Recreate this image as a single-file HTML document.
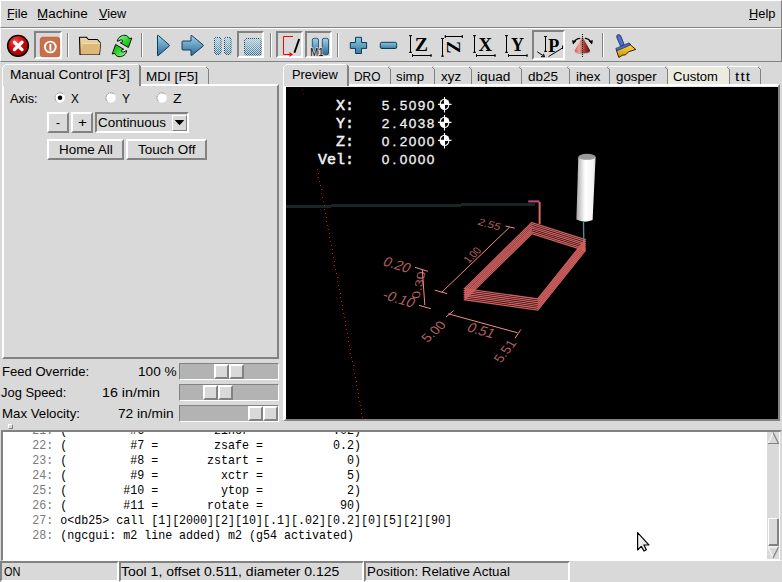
<!DOCTYPE html>
<html><head><meta charset="utf-8"><style>
html,body{margin:0;padding:0;}
body{width:782px;height:582px;overflow:hidden;position:relative;background:#d9d9d9;}
.t{position:absolute;white-space:pre;transform-origin:0 0;}
svg{overflow:visible}
</style></head><body>
<div style="position:absolute;left:0px;top:0px;width:782px;height:28px;box-sizing:border-box;border-style:solid;border-width:1px;border-color:#ffffff #828282 #828282 #ffffff;"></div>
<div class="t" style="left:6.50px;top:6.90px;font:normal 13px/13px 'Liberation Sans', sans-serif;color:#000;transform:scaleX(0.9842);">File</div>
<div class="t" style="left:37.30px;top:6.90px;font:normal 13px/13px 'Liberation Sans', sans-serif;color:#000;transform:scaleX(1.0317);">Machine</div>
<div class="t" style="left:99.00px;top:6.90px;font:normal 13px/13px 'Liberation Sans', sans-serif;color:#000;transform:scaleX(0.9732);">View</div>
<div class="t" style="left:748.50px;top:6.90px;font:normal 13px/13px 'Liberation Sans', sans-serif;color:#000;transform:scaleX(0.9882);">Help</div>
<div style="position:absolute;left:7px;top:19px;width:7px;height:1px;background:#000"></div>
<div style="position:absolute;left:38px;top:19px;width:9px;height:1px;background:#000"></div>
<div style="position:absolute;left:99px;top:19px;width:8px;height:1px;background:#000"></div>
<div style="position:absolute;left:749px;top:19px;width:8px;height:1px;background:#000"></div>
<div style="position:absolute;left:0px;top:28px;width:782px;height:34px;box-sizing:border-box;border-style:solid;border-width:1px;border-color:#ffffff #828282 #828282 #ffffff;"></div>
<div style="position:absolute;left:67px;top:33px;width:1px;height:24px;background:#828282"></div>
<div style="position:absolute;left:68px;top:33px;width:1px;height:24px;background:#ffffff"></div>
<div style="position:absolute;left:141px;top:33px;width:1px;height:24px;background:#828282"></div>
<div style="position:absolute;left:142px;top:33px;width:1px;height:24px;background:#ffffff"></div>
<div style="position:absolute;left:270px;top:33px;width:1px;height:24px;background:#828282"></div>
<div style="position:absolute;left:271px;top:33px;width:1px;height:24px;background:#ffffff"></div>
<div style="position:absolute;left:337px;top:33px;width:1px;height:24px;background:#828282"></div>
<div style="position:absolute;left:338px;top:33px;width:1px;height:24px;background:#ffffff"></div>
<div style="position:absolute;left:602px;top:33px;width:1px;height:24px;background:#828282"></div>
<div style="position:absolute;left:603px;top:33px;width:1px;height:24px;background:#ffffff"></div>
<div style="position:absolute;left:34px;top:31px;width:28px;height:28px;box-sizing:border-box;border-style:solid;border-width:2px;border-color:#828282 #ffffff #ffffff #828282;"></div>
<div style="position:absolute;left:237px;top:31px;width:27px;height:27px;box-sizing:border-box;border-style:solid;border-width:2px;border-color:#828282 #ffffff #ffffff #828282;"></div>
<div style="position:absolute;left:276px;top:31px;width:27px;height:27px;box-sizing:border-box;border-style:solid;border-width:2px;border-color:#828282 #ffffff #ffffff #828282;"></div>
<div style="position:absolute;left:305px;top:31px;width:27px;height:27px;box-sizing:border-box;border-style:solid;border-width:2px;border-color:#828282 #ffffff #ffffff #828282;"></div>
<div style="position:absolute;left:532px;top:30px;width:33px;height:30px;box-sizing:border-box;border-style:solid;border-width:2px;border-color:#828282 #ffffff #ffffff #828282;"></div>
<div style="position:absolute;left:2px;top:84px;width:277px;height:275px;box-sizing:border-box;border-style:solid;border-width:2px;border-color:#ffffff #828282 #828282 #ffffff;"></div>
<div style="position:absolute;left:141px;top:66px;width:65px;height:18px;box-sizing:border-box;border-top:1px solid #ffffff;"></div>
<div style="position:absolute;left:206px;top:67px;width:1px;height:1px;background:#828282"></div>
<div style="position:absolute;left:207px;top:68px;width:1px;height:1px;background:#828282"></div>
<div style="position:absolute;left:208px;top:69px;width:1px;height:15px;background:#828282"></div>
<div style="position:absolute;left:2px;top:64px;width:139px;height:22px;box-sizing:border-box;background:#d9d9d9;border-style:solid;border-width:1px 2px 0 1px;border-color:#ffffff #828282 #ffffff #ffffff;"></div>
<div class="t" style="left:10.30px;top:67.50px;font:normal 13px/13px 'Liberation Sans', sans-serif;color:#000;transform:scaleX(1.0496);">Manual Control [F3]</div>
<div class="t" style="left:145.50px;top:69.50px;font:normal 13px/13px 'Liberation Sans', sans-serif;color:#000;transform:scaleX(1.0430);">MDI [F5]</div>
<div class="t" style="left:10.30px;top:92.00px;font:normal 13px/13px 'Liberation Sans', sans-serif;color:#000;transform:scaleX(0.9806);">Axis:</div>
<div class="t" style="left:70.80px;top:92.00px;font:normal 13px/13px 'Liberation Sans', sans-serif;color:#000;transform:scaleX(0.9023);">X</div>
<div class="t" style="left:122.30px;top:92.00px;font:normal 13px/13px 'Liberation Sans', sans-serif;color:#000;transform:scaleX(0.9254);">Y</div>
<div class="t" style="left:172.90px;top:92.00px;font:normal 13px/13px 'Liberation Sans', sans-serif;color:#000;transform:scaleX(1.0845);">Z</div>
<div style="position:absolute;left:47px;top:112px;width:22px;height:21px;box-sizing:border-box;border-style:solid;border-width:2px;border-color:#ffffff #828282 #828282 #ffffff;"></div>
<div class="t" style="left:56.00px;top:115.50px;font:normal 13px/13px 'Liberation Sans', sans-serif;color:#000;transform:scaleX(0.9185);">-</div>
<div style="position:absolute;left:71px;top:112px;width:22px;height:21px;box-sizing:border-box;border-style:solid;border-width:2px;border-color:#ffffff #828282 #828282 #ffffff;"></div>
<div class="t" style="left:77.50px;top:116.00px;font:normal 13px/13px 'Liberation Sans', sans-serif;color:#000;transform:scaleX(1.1834);">+</div>
<div style="position:absolute;left:95px;top:112px;width:94px;height:21px;box-sizing:border-box;border-style:solid;border-width:2px;border-color:#828282 #ffffff #ffffff #828282;"></div>
<div class="t" style="left:98.30px;top:116.00px;font:normal 13px/13px 'Liberation Sans', sans-serif;color:#000;transform:scaleX(1.0337);">Continuous</div>
<div style="position:absolute;left:172px;top:115px;width:15px;height:16px;box-sizing:border-box;border-style:solid;border-width:1px;border-color:#ffffff #828282 #828282 #ffffff;"></div>
<div style="position:absolute;left:47px;top:139px;width:77px;height:21px;box-sizing:border-box;border-style:solid;border-width:2px;border-color:#ffffff #828282 #828282 #ffffff;"></div>
<div class="t" style="left:58.70px;top:142.90px;font:normal 13px/13px 'Liberation Sans', sans-serif;color:#000;transform:scaleX(1.0308);">Home All</div>
<div style="position:absolute;left:126px;top:139px;width:81px;height:21px;box-sizing:border-box;border-style:solid;border-width:2px;border-color:#ffffff #828282 #828282 #ffffff;"></div>
<div class="t" style="left:138.30px;top:142.90px;font:normal 13px/13px 'Liberation Sans', sans-serif;color:#000;transform:scaleX(1.0371);">Touch Off</div>
<div class="t" style="left:2.30px;top:365.00px;font:normal 13px/13px 'Liberation Sans', sans-serif;color:#000;transform:scaleX(1.0057);">Feed Override:</div>
<div class="t" style="left:138.30px;top:365.00px;font:normal 13px/13px 'Liberation Sans', sans-serif;color:#000;transform:scaleX(1.0473);">100 %</div>
<div class="t" style="left:1.20px;top:385.70px;font:normal 13px/13px 'Liberation Sans', sans-serif;color:#000;transform:scaleX(0.9927);">Jog Speed:</div>
<div class="t" style="left:102.30px;top:385.70px;font:normal 13px/13px 'Liberation Sans', sans-serif;color:#000;transform:scaleX(1.0970);">16 in/min</div>
<div class="t" style="left:2.30px;top:406.90px;font:normal 13px/13px 'Liberation Sans', sans-serif;color:#000;transform:scaleX(1.0187);">Max Velocity:</div>
<div class="t" style="left:117.90px;top:406.90px;font:normal 13px/13px 'Liberation Sans', sans-serif;color:#000;transform:scaleX(1.0534);">72 in/min</div>
<div style="position:absolute;left:179px;top:363px;width:100px;height:17px;box-sizing:border-box;border-style:solid;border-width:1px;border-color:#828282 #ffffff #ffffff #828282;background:#b3b3b3;"></div>
<div style="position:absolute;left:214px;top:364px;width:15px;height:15px;box-sizing:border-box;border-style:solid;border-width:2px;border-color:#ffffff #828282 #828282 #ffffff;background:#d9d9d9;"></div>
<div style="position:absolute;left:229px;top:364px;width:15px;height:15px;box-sizing:border-box;border-style:solid;border-width:2px;border-color:#ffffff #828282 #828282 #ffffff;background:#d9d9d9;"></div>
<div style="position:absolute;left:179px;top:384px;width:100px;height:17px;box-sizing:border-box;border-style:solid;border-width:1px;border-color:#828282 #ffffff #ffffff #828282;background:#b3b3b3;"></div>
<div style="position:absolute;left:203px;top:385px;width:15px;height:15px;box-sizing:border-box;border-style:solid;border-width:2px;border-color:#ffffff #828282 #828282 #ffffff;background:#d9d9d9;"></div>
<div style="position:absolute;left:218px;top:385px;width:15px;height:15px;box-sizing:border-box;border-style:solid;border-width:2px;border-color:#ffffff #828282 #828282 #ffffff;background:#d9d9d9;"></div>
<div style="position:absolute;left:179px;top:405px;width:100px;height:17px;box-sizing:border-box;border-style:solid;border-width:1px;border-color:#828282 #ffffff #ffffff #828282;background:#b3b3b3;"></div>
<div style="position:absolute;left:248px;top:406px;width:15px;height:15px;box-sizing:border-box;border-style:solid;border-width:2px;border-color:#ffffff #828282 #828282 #ffffff;background:#d9d9d9;"></div>
<div style="position:absolute;left:263px;top:406px;width:15px;height:15px;box-sizing:border-box;border-style:solid;border-width:2px;border-color:#ffffff #828282 #828282 #ffffff;background:#d9d9d9;"></div>
<div style="position:absolute;left:8px;top:424px;width:5px;height:5px;box-sizing:border-box;border-style:solid;border-width:1px;border-color:#ffffff #828282 #828282 #ffffff;"></div>
<div style="position:absolute;left:283px;top:84px;width:497px;height:337px;box-sizing:border-box;border-style:solid;border-width:2px 2px 2px 3px;border-color:#ffffff #828282 #828282 #ffffff;"></div>
<div style="position:absolute;left:286px;top:86px;width:492px;height:1px;background:#ececec"></div>
<div style="position:absolute;left:286px;top:87px;width:492px;height:332px;background:#000"></div>
<div style="position:absolute;left:349px;top:66px;width:42px;height:18px;box-sizing:border-box;background:#d9d9d9;border-top:1px solid #ffffff;"></div>
<div style="position:absolute;left:388px;top:66px;width:2px;height:1px;background:#d9d9d9"></div>
<div style="position:absolute;left:388px;top:67px;width:1px;height:1px;background:#828282"></div>
<div style="position:absolute;left:389px;top:68px;width:1px;height:1px;background:#828282"></div>
<div style="position:absolute;left:390px;top:67px;width:1px;height:1px;background:#d9d9d9"></div>
<div style="position:absolute;left:390px;top:68px;width:1px;height:1px;background:#d9d9d9"></div>
<div style="position:absolute;left:390px;top:69px;width:1px;height:15px;background:#828282"></div>
<div class="t" style="left:354.00px;top:69.90px;font:normal 13px/13px 'Liberation Sans', sans-serif;color:#000;transform:scaleX(0.9182);">DRO</div>
<div style="position:absolute;left:391px;top:66px;width:44px;height:18px;box-sizing:border-box;background:#d9d9d9;border-top:1px solid #ffffff;"></div>
<div style="position:absolute;left:432px;top:66px;width:2px;height:1px;background:#d9d9d9"></div>
<div style="position:absolute;left:432px;top:67px;width:1px;height:1px;background:#828282"></div>
<div style="position:absolute;left:433px;top:68px;width:1px;height:1px;background:#828282"></div>
<div style="position:absolute;left:434px;top:67px;width:1px;height:1px;background:#d9d9d9"></div>
<div style="position:absolute;left:434px;top:68px;width:1px;height:1px;background:#d9d9d9"></div>
<div style="position:absolute;left:434px;top:69px;width:1px;height:15px;background:#828282"></div>
<div class="t" style="left:396.20px;top:69.90px;font:normal 13px/13px 'Liberation Sans', sans-serif;color:#000;transform:scaleX(1.0208);">simp</div>
<div style="position:absolute;left:435px;top:66px;width:37px;height:18px;box-sizing:border-box;background:#d9d9d9;border-top:1px solid #ffffff;"></div>
<div style="position:absolute;left:469px;top:66px;width:2px;height:1px;background:#d9d9d9"></div>
<div style="position:absolute;left:469px;top:67px;width:1px;height:1px;background:#828282"></div>
<div style="position:absolute;left:470px;top:68px;width:1px;height:1px;background:#828282"></div>
<div style="position:absolute;left:471px;top:67px;width:1px;height:1px;background:#d9d9d9"></div>
<div style="position:absolute;left:471px;top:68px;width:1px;height:1px;background:#d9d9d9"></div>
<div style="position:absolute;left:471px;top:69px;width:1px;height:15px;background:#828282"></div>
<div class="t" style="left:441.00px;top:69.90px;font:normal 13px/13px 'Liberation Sans', sans-serif;color:#000;transform:scaleX(1.0308);">xyz</div>
<div style="position:absolute;left:472px;top:66px;width:50px;height:18px;box-sizing:border-box;background:#d9d9d9;border-top:1px solid #ffffff;"></div>
<div style="position:absolute;left:519px;top:66px;width:2px;height:1px;background:#d9d9d9"></div>
<div style="position:absolute;left:519px;top:67px;width:1px;height:1px;background:#828282"></div>
<div style="position:absolute;left:520px;top:68px;width:1px;height:1px;background:#828282"></div>
<div style="position:absolute;left:521px;top:67px;width:1px;height:1px;background:#d9d9d9"></div>
<div style="position:absolute;left:521px;top:68px;width:1px;height:1px;background:#d9d9d9"></div>
<div style="position:absolute;left:521px;top:69px;width:1px;height:15px;background:#828282"></div>
<div class="t" style="left:477.20px;top:69.90px;font:normal 13px/13px 'Liberation Sans', sans-serif;color:#000;transform:scaleX(1.0508);">iquad</div>
<div style="position:absolute;left:522px;top:66px;width:48px;height:18px;box-sizing:border-box;background:#d9d9d9;border-top:1px solid #ffffff;"></div>
<div style="position:absolute;left:567px;top:66px;width:2px;height:1px;background:#d9d9d9"></div>
<div style="position:absolute;left:567px;top:67px;width:1px;height:1px;background:#828282"></div>
<div style="position:absolute;left:568px;top:68px;width:1px;height:1px;background:#828282"></div>
<div style="position:absolute;left:569px;top:67px;width:1px;height:1px;background:#d9d9d9"></div>
<div style="position:absolute;left:569px;top:68px;width:1px;height:1px;background:#d9d9d9"></div>
<div style="position:absolute;left:569px;top:69px;width:1px;height:15px;background:#828282"></div>
<div class="t" style="left:527.80px;top:69.90px;font:normal 13px/13px 'Liberation Sans', sans-serif;color:#000;transform:scaleX(1.0372);">db25</div>
<div style="position:absolute;left:570px;top:66px;width:40px;height:18px;box-sizing:border-box;background:#d9d9d9;border-top:1px solid #ffffff;"></div>
<div style="position:absolute;left:607px;top:66px;width:2px;height:1px;background:#d9d9d9"></div>
<div style="position:absolute;left:607px;top:67px;width:1px;height:1px;background:#828282"></div>
<div style="position:absolute;left:608px;top:68px;width:1px;height:1px;background:#828282"></div>
<div style="position:absolute;left:609px;top:67px;width:1px;height:1px;background:#d9d9d9"></div>
<div style="position:absolute;left:609px;top:68px;width:1px;height:1px;background:#d9d9d9"></div>
<div style="position:absolute;left:609px;top:69px;width:1px;height:15px;background:#828282"></div>
<div class="t" style="left:575.50px;top:69.90px;font:normal 13px/13px 'Liberation Sans', sans-serif;color:#000;transform:scaleX(1.0228);">ihex</div>
<div style="position:absolute;left:610px;top:66px;width:58px;height:18px;box-sizing:border-box;background:#d9d9d9;border-top:1px solid #ffffff;"></div>
<div style="position:absolute;left:665px;top:66px;width:2px;height:1px;background:#d9d9d9"></div>
<div style="position:absolute;left:665px;top:67px;width:1px;height:1px;background:#828282"></div>
<div style="position:absolute;left:666px;top:68px;width:1px;height:1px;background:#828282"></div>
<div style="position:absolute;left:667px;top:67px;width:1px;height:1px;background:#d9d9d9"></div>
<div style="position:absolute;left:667px;top:68px;width:1px;height:1px;background:#d9d9d9"></div>
<div style="position:absolute;left:667px;top:69px;width:1px;height:15px;background:#828282"></div>
<div class="t" style="left:616.30px;top:69.90px;font:normal 13px/13px 'Liberation Sans', sans-serif;color:#000;transform:scaleX(1.0231);">gosper</div>
<div style="position:absolute;left:668px;top:66px;width:62px;height:18px;box-sizing:border-box;background:#ecebdf;border-top:1px solid #ffffff;"></div>
<div style="position:absolute;left:727px;top:66px;width:2px;height:1px;background:#d9d9d9"></div>
<div style="position:absolute;left:727px;top:67px;width:1px;height:1px;background:#828282"></div>
<div style="position:absolute;left:728px;top:68px;width:1px;height:1px;background:#828282"></div>
<div style="position:absolute;left:729px;top:67px;width:1px;height:1px;background:#d9d9d9"></div>
<div style="position:absolute;left:729px;top:68px;width:1px;height:1px;background:#d9d9d9"></div>
<div style="position:absolute;left:729px;top:69px;width:1px;height:15px;background:#828282"></div>
<div class="t" style="left:673.30px;top:69.90px;font:normal 13px/13px 'Liberation Sans', sans-serif;color:#000;transform:scaleX(1.0026);">Custom</div>
<div style="position:absolute;left:730px;top:66px;width:31px;height:18px;box-sizing:border-box;background:#d9d9d9;border-top:1px solid #ffffff;"></div>
<div style="position:absolute;left:758px;top:66px;width:2px;height:1px;background:#d9d9d9"></div>
<div style="position:absolute;left:758px;top:67px;width:1px;height:1px;background:#828282"></div>
<div style="position:absolute;left:759px;top:68px;width:1px;height:1px;background:#828282"></div>
<div style="position:absolute;left:760px;top:67px;width:1px;height:1px;background:#d9d9d9"></div>
<div style="position:absolute;left:760px;top:68px;width:1px;height:1px;background:#d9d9d9"></div>
<div style="position:absolute;left:760px;top:69px;width:1px;height:15px;background:#828282"></div>
<div class="t" style="left:735.00px;top:69.90px;font:normal 13px/13px 'Liberation Sans', sans-serif;color:#000;transform:scaleX(1.1794);letter-spacing:0.974px;">ttt</div>
<div style="position:absolute;left:283px;top:64px;width:66px;height:22px;box-sizing:border-box;background:#d9d9d9;border-style:solid;border-width:1px 2px 0 1px;border-color:#ffffff #828282 #ffffff #ffffff;"></div>
<div class="t" style="left:291.70px;top:67.80px;font:normal 13px/13px 'Liberation Sans', sans-serif;color:#000;transform:scaleX(0.9875);">Preview</div>
<div style="position:absolute;left:1px;top:430px;width:781px;height:131px;box-sizing:border-box;background:#fff;border-style:solid;border-width:2px 2px 1px 2px;border-color:#828282 #d9d9d9 #ffffff #828282;"></div>
<div style="position:absolute;left:767px;top:432px;width:12px;height:127px;background:#d9d9d9"></div>
<div style="position:absolute;left:0px;top:561px;width:119px;height:21px;box-sizing:border-box;border-style:solid;border-width:2px;border-color:#828282 #ffffff #ffffff #828282;background:#d9d9d9;"></div>
<div style="position:absolute;left:119px;top:561px;width:245px;height:21px;box-sizing:border-box;border-style:solid;border-width:2px;border-color:#828282 #ffffff #ffffff #828282;background:#d9d9d9;"></div>
<div style="position:absolute;left:364px;top:561px;width:206px;height:21px;box-sizing:border-box;border-style:solid;border-width:2px;border-color:#828282 #ffffff #ffffff #828282;background:#d9d9d9;"></div>
<div class="t" style="left:3.60px;top:564.80px;font:normal 13px/13px 'Liberation Sans', sans-serif;color:#000;transform:scaleX(0.8410);">ON</div>
<div class="t" style="left:120.90px;top:564.50px;font:normal 13px/13px 'Liberation Sans', sans-serif;color:#000;transform:scaleX(1.0775);">Tool 1, offset 0.511, diameter 0.125</div>
<div class="t" style="left:366.60px;top:564.50px;font:normal 13px/13px 'Liberation Sans', sans-serif;color:#000;transform:scaleX(1.0244);">Position: Relative Actual</div>
<svg style="position:absolute;left:0;top:0" width="782" height="582" viewBox="0 0 782 582">
<defs>
<radialGradient id="gRed" cx="0.38" cy="0.3" r="0.75"><stop offset="0" stop-color="#f05050"/><stop offset="0.5" stop-color="#d00808"/><stop offset="1" stop-color="#900000"/></radialGradient>
<linearGradient id="gBlue" x1="0" y1="0" x2="0" y2="1"><stop offset="0" stop-color="#9ed2e8"/><stop offset="1" stop-color="#2a6a96"/></linearGradient>
<linearGradient id="gBlue2" x1="0" y1="0" x2="0" y2="1"><stop offset="0" stop-color="#8cc6de"/><stop offset="1" stop-color="#3c7ca2"/></linearGradient>
<linearGradient id="gTan" x1="0" y1="0" x2="0" y2="1"><stop offset="0" stop-color="#f0d8a8"/><stop offset="1" stop-color="#d8b070"/></linearGradient>
<linearGradient id="gGreen" x1="0" y1="0" x2="1" y2="1"><stop offset="0" stop-color="#a8f8a8"/><stop offset="0.5" stop-color="#30d830"/><stop offset="1" stop-color="#10a010"/></linearGradient>
<linearGradient id="gCone" x1="0" y1="0" x2="1" y2="0"><stop offset="0" stop-color="#d06050"/><stop offset="0.3" stop-color="#f0a090"/><stop offset="0.6" stop-color="#b04030"/><stop offset="1" stop-color="#501010"/></linearGradient>
<linearGradient id="gBrush" x1="0" y1="0" x2="0" y2="1"><stop offset="0" stop-color="#f8e040"/><stop offset="1" stop-color="#d89000"/></linearGradient>
<linearGradient id="gDis" x1="0" y1="0" x2="0" y2="1"><stop offset="0" stop-color="#a8d8ea"/><stop offset="1" stop-color="#2a6e9e"/></linearGradient><pattern id="pChk" width="2" height="2" patternUnits="userSpaceOnUse"><rect x="1" y="0" width="1" height="1" fill="#d9d9d9"/><rect x="0" y="1" width="1" height="1" fill="#d9d9d9"/></pattern><pattern id="pDith" width="2" height="2" patternUnits="userSpaceOnUse"><rect width="2" height="2" fill="#d9d9d9"/><rect width="1" height="1" fill="#5a8cb0"/><rect x="1" y="1" width="1" height="1" fill="#7aa8c8"/></pattern>
<pattern id="pDith2" width="2" height="2" patternUnits="userSpaceOnUse"><rect width="2" height="2" fill="#b8d0dc"/><rect width="1" height="1" fill="#4a7ea4"/><rect x="1" y="1" width="1" height="1" fill="#6a9cbc"/></pattern>
</defs>

<!-- estop -->
<circle cx="18" cy="45.8" r="10.4" fill="url(#gRed)" stroke="#000" stroke-width="1.4"/>
<path d="M14.4 42.2 L22 49.6 M22 42.2 L14.4 49.6" stroke="#fff" stroke-width="3.3" stroke-linecap="round"/>
<!-- power -->
<rect x="40.3" y="37.2" width="19.4" height="19.6" rx="2.5" fill="#c8704c" stroke="#c43c24" stroke-width="0.6"/>
<circle cx="50.3" cy="47" r="5.4" fill="none" stroke="#fff" stroke-width="1.9"/>
<path d="M50.4 44 L50.4 50.6" stroke="#fff" stroke-width="1.9"/>
<!-- folder -->
<path d="M79.5 37.3 L86.6 37.3 L88.4 39.5 L97.5 39.5 L100.5 43 L99.5 54.5 L80 54.5 Z" fill="url(#gTan)" stroke="#000" stroke-width="1.1" stroke-linejoin="round"/>
<path d="M82.6 44.6 Q83 43.4 84.5 43.4 L100.4 43.2 L99.3 54.4 L80.6 54.4 Z" fill="#ddb878" stroke="none"/>
<path d="M82.8 44.5 Q83 43.5 84.5 43.4 L100.4 43.2" fill="none" stroke="#f8ecd0" stroke-width="0.8"/>
<!-- reload -->
<g id="arr"><path d="M117.3 41.3 C117.8 37.2 121.5 35.2 125 35.3 C127.2 35.5 128.5 36.8 129.2 38.6 L131.8 38 L128.4 47.5 L120.3 42.8 L122.6 41.8 C122.9 40.4 121.8 39.6 120.6 40 C119.4 40.5 118.6 41.2 117.3 41.3 Z" fill="url(#gGreen)" stroke="#000" stroke-width="0.9" stroke-linejoin="round"/></g>
<g transform="rotate(180 122 46)"><path d="M117.3 41.3 C117.8 37.2 121.5 35.2 125 35.3 C127.2 35.5 128.5 36.8 129.2 38.6 L131.8 38 L128.4 47.5 L120.3 42.8 L122.6 41.8 C122.9 40.4 121.8 39.6 120.6 40 C119.4 40.5 118.6 41.2 117.3 41.3 Z" fill="url(#gGreen)" stroke="#000" stroke-width="0.9" stroke-linejoin="round"/></g>
<!-- play -->
<path d="M157.5 36 Q157.3 34.8 158.4 35.5 L169 44.7 Q169.8 45.5 169 46.3 L158.4 55.5 Q157.3 56.2 157.5 55 Z" fill="url(#gBlue)" stroke="#0e3e5e" stroke-width="1"/>
<!-- step -->
<path d="M182 42 Q182 41 183 41 L191 41 L191 36 Q191 35 192 35.7 L203 44.8 Q203.7 45.5 203 46.2 L192 55.3 Q191 56 191 55 L191 50 L183 50 Q182 50 182 49 Z" fill="url(#gBlue)" stroke="#0e3e5e" stroke-width="1"/>
<!-- pause (disabled dithered) -->
<rect x="214.5" y="37.5" width="6.5" height="17" rx="2" fill="url(#gDis)" stroke="#0a4a78" stroke-width="1"/>
<rect x="224.5" y="37.5" width="6.5" height="17" rx="2" fill="url(#gDis)" stroke="#0a4a78" stroke-width="1"/>
<rect x="214" y="37" width="18" height="18.5" fill="url(#pChk)"/>
<!-- stop (disabled dithered) -->
<rect x="244.5" y="38.5" width="16.5" height="16.5" rx="1.8" fill="url(#gDis)" stroke="#0a4a78" stroke-width="1"/>
<rect x="244" y="38" width="18" height="18" fill="url(#pChk)"/>
<!-- block delete -->
<path d="M293 36.5 L283.5 36.5 L283.5 54.5 L290 54.5" fill="none" stroke="#ff0000" stroke-width="1"/>
<path d="M289.5 52 L293 54.5 L289.5 57 Z" fill="#ff0000"/>
<path d="M299.2 39 L294.4 52.8" stroke="#000" stroke-width="1.9"/>
<!-- M1 -->
<rect x="312.3" y="38.3" width="6.2" height="16.5" rx="1.8" fill="url(#gBlue)" stroke="#0e3e5e" stroke-width="0.8"/>
<rect x="322.3" y="38.3" width="6.2" height="16.5" rx="1.8" fill="url(#gBlue)" stroke="#0e3e5e" stroke-width="0.8"/>
<text x="310.3" y="55.6" font-family="Liberation Sans, sans-serif" font-size="10" font-weight="normal" fill="#000" stroke="#dcdcdc" stroke-width="1.4" paint-order="stroke" textLength="13.3" lengthAdjust="spacingAndGlyphs">M1</text>
<!-- plus -->
<path d="M355.5 37.3 L361.5 37.3 L361.5 42.5 L366.6 42.5 L366.6 48.4 L361.5 48.4 L361.5 53.5 L355.5 53.5 L355.5 48.4 L350.3 48.4 L350.3 42.5 L355.5 42.5 Z" fill="url(#gBlue2)" stroke="#0a3a5a" stroke-width="1" stroke-linejoin="round"/>
<rect x="380.3" y="42.3" width="16.4" height="6.2" rx="1.5" fill="url(#gBlue2)" stroke="#0a3a5a" stroke-width="1"/>
<path d="M410.5 35.2 L410.5 52.8 M409 35.7 L412 35.7 M409 52.3 L412 52.3" stroke="#000" stroke-width="1"/><text x="414.8" y="51.2" font-family="Liberation Serif, serif" font-weight="bold" font-size="18.5" textLength="13.2" lengthAdjust="spacingAndGlyphs" >Z</text><path d="M412 55.5 L431.5 55.5 M412.5 54 L412.5 57 M431.0 54 L431.0 57" stroke="#000" stroke-width="1"/><path d="M442.5 38 L442.5 56.6 M441 38.5 L444 38.5 M441 56.1 L444 56.1" stroke="#000" stroke-width="1"/><path d="M444.8 36.5 L462.8 36.5 M445.3 35 L445.3 38 M462.3 35 L462.3 38" stroke="#000" stroke-width="1"/><text x="0" y="0" font-family="Liberation Serif, serif" font-weight="bold" font-size="18.5" textLength="12.5" lengthAdjust="spacingAndGlyphs" transform="translate(447,41) rotate(90)">Z</text><path d="M474.5 35.2 L474.5 52.8 M473 35.7 L476 35.7 M473 52.3 L476 52.3" stroke="#000" stroke-width="1"/><text x="478.6" y="51.2" font-family="Liberation Serif, serif" font-weight="bold" font-size="18.5" textLength="13.6" lengthAdjust="spacingAndGlyphs" >X</text><path d="M476 55.5 L495.5 55.5 M476.5 54 L476.5 57 M495.0 54 L495.0 57" stroke="#000" stroke-width="1"/><path d="M506.5 35.2 L506.5 52.8 M505 35.7 L508 35.7 M505 52.3 L508 52.3" stroke="#000" stroke-width="1"/><text x="511" y="51.2" font-family="Liberation Serif, serif" font-weight="bold" font-size="18.5" textLength="13.0" lengthAdjust="spacingAndGlyphs" >Y</text><path d="M508 55.5 L527.5 55.5 M508.5 54 L508.5 57 M527.0 54 L527.0 57" stroke="#000" stroke-width="1"/><path d="M545.5 36 L545.5 51.8 M544 36.5 L547 36.5 M544 51.3 L547 51.3" stroke="#000" stroke-width="1"/><text x="548.3" y="51.6" font-family="Liberation Serif, serif" font-weight="bold" font-size="18.5" textLength="11.0" lengthAdjust="spacingAndGlyphs" >P</text><path d="M537.3 51.8 L544.2 56.4 M548.5 56.6 L562.5 48 M562.6 45.5 L562.6 49" stroke="#000" stroke-width="1" fill="none"/><path d="M541 56.6 L544.6 56.8 L543.4 53.8" stroke="#000" stroke-width="1" fill="none"/><ellipse cx="582.5" cy="51.8" rx="8" ry="2.4" fill="#202020" opacity="0.2"/><path d="M582.4 36.8 L590 50.3 Q590 53.2 582.4 53.2 Q574.8 53.2 574.8 50.3 Z" fill="url(#gCone)"/><path d="M582.5 34 L582.5 58" stroke="#000" stroke-width="1" stroke-dasharray="1 1"/><path d="M580.2 38.3 Q576.2 38.6 574.3 41.6 M584.8 38.3 Q588.8 38.6 590.7 41.6" stroke="#000" stroke-width="1.1" fill="none"/><path d="M572 40.2 L576.3 41 L573 44.4 Z M593 40.2 L588.7 41 L592 44.4 Z" fill="#000"/><path d="M616.8 37.5 Q616.2 35 618.3 34.6 Q620.2 34.4 621 36.5 L624.2 44.8 L620.6 46.3 Z" fill="#5272c4" stroke="#142460" stroke-width="0.8"/><path d="M616.2 49.6 L629.8 43.6 L631.2 45.6 L635.8 49.4 L628.6 51.8 L625.6 54.8 L622.5 55.2 L618.8 57.4 Z" fill="url(#gBrush)" stroke="#1a1400" stroke-width="0.9" stroke-linejoin="round"/><path d="M615.8 48.4 L629 42.8 L630.2 45.2 L616.8 50.9 Z" fill="#4a6cc0" stroke="#142460" stroke-width="0.6"/></svg>
<svg style="position:absolute;left:286px;top:87px;overflow:hidden" width="492" height="331" viewBox="286 87 492 331"><g fill="#182626"><rect x="286" y="205" width="45" height="3"/><rect x="331" y="204" width="130" height="3"/><rect x="461" y="203" width="74" height="3"/></g><g fill="#f00000"><rect x="317" y="169" width="1" height="1"/><rect x="318" y="173" width="1" height="1"/><rect x="318" y="177" width="1" height="1"/><rect x="319" y="181" width="1" height="1"/><rect x="320" y="185" width="1" height="1"/><rect x="321" y="189" width="1" height="1"/><rect x="321" y="193" width="1" height="1"/><rect x="322" y="197" width="1" height="1"/><rect x="323" y="201" width="1" height="1"/><rect x="324" y="205" width="1" height="1"/><rect x="324" y="209" width="1" height="1"/><rect x="325" y="213" width="1" height="1"/><rect x="326" y="217" width="1" height="1"/><rect x="326" y="221" width="1" height="1"/><rect x="327" y="225" width="1" height="1"/><rect x="328" y="229" width="1" height="1"/><rect x="329" y="233" width="1" height="1"/><rect x="329" y="237" width="1" height="1"/><rect x="330" y="241" width="1" height="1"/><rect x="331" y="245" width="1" height="1"/><rect x="332" y="249" width="1" height="1"/><rect x="332" y="253" width="1" height="1"/><rect x="333" y="257" width="1" height="1"/><rect x="334" y="261" width="1" height="1"/><rect x="334" y="265" width="1" height="1"/><rect x="335" y="269" width="1" height="1"/><rect x="336" y="273" width="1" height="1"/><rect x="337" y="277" width="1" height="1"/><rect x="337" y="281" width="1" height="1"/><rect x="338" y="285" width="1" height="1"/><rect x="339" y="289" width="1" height="1"/><rect x="340" y="293" width="1" height="1"/><rect x="340" y="297" width="1" height="1"/><rect x="341" y="301" width="1" height="1"/><rect x="342" y="305" width="1" height="1"/><rect x="342" y="309" width="1" height="1"/><rect x="343" y="313" width="1" height="1"/><rect x="344" y="317" width="1" height="1"/><rect x="345" y="321" width="1" height="1"/><rect x="345" y="325" width="1" height="1"/><rect x="346" y="329" width="1" height="1"/><rect x="347" y="333" width="1" height="1"/><rect x="348" y="337" width="1" height="1"/><rect x="348" y="341" width="1" height="1"/><rect x="349" y="345" width="1" height="1"/><rect x="350" y="349" width="1" height="1"/><rect x="350" y="353" width="1" height="1"/><rect x="351" y="357" width="1" height="1"/><rect x="352" y="361" width="1" height="1"/><rect x="353" y="365" width="1" height="1"/><rect x="353" y="369" width="1" height="1"/><rect x="354" y="373" width="1" height="1"/><rect x="355" y="377" width="1" height="1"/><rect x="356" y="381" width="1" height="1"/><rect x="356" y="385" width="1" height="1"/><rect x="357" y="389" width="1" height="1"/><rect x="358" y="393" width="1" height="1"/><rect x="358" y="397" width="1" height="1"/><rect x="359" y="401" width="1" height="1"/><rect x="360" y="405" width="1" height="1"/><rect x="361" y="409" width="1" height="1"/><rect x="361" y="413" width="1" height="1"/><rect x="362" y="417" width="1" height="1"/></g><g fill="#900000"><rect x="302" y="89" width="1" height="1"/><rect x="303" y="93" width="1" height="1"/></g><path d="M528.2 201.4 L539.5 201.4" stroke="#c04888" stroke-width="2" fill="none"/><path d="M539.6 202 L539.6 224" stroke="#d86a6a" stroke-width="2" fill="none"/><polygon points="531.8,222.6 585.2,239.6 537.8,299.0 464.6,288.6" fill="none" stroke="#d06060" stroke-width="1.3"/><polygon points="531.8,224.4 585.2,241.4 537.8,300.9 464.6,290.5" fill="none" stroke="#d06060" stroke-width="1.3"/><polygon points="531.8,226.3 585.2,243.3 537.8,302.7 464.6,292.3" fill="none" stroke="#d06060" stroke-width="1.3"/><polygon points="531.8,228.2 585.2,245.2 537.8,304.6 464.6,294.2" fill="none" stroke="#d06060" stroke-width="1.3"/><polygon points="531.8,230.0 585.2,247.0 537.8,306.4 464.6,296.0" fill="none" stroke="#d06060" stroke-width="1.3"/><polygon points="531.8,231.8 585.2,248.8 537.8,308.2 464.6,297.9" fill="none" stroke="#d06060" stroke-width="1.3"/><polygon points="531.8,233.7 585.2,250.7 537.8,310.1 464.6,299.7" fill="none" stroke="#d06060" stroke-width="1.3"/><defs><linearGradient id="gTool" x1="0" y1="0" x2="1" y2="0"><stop offset="0" stop-color="#a8a8a8"/><stop offset="0.45" stop-color="#ffffff"/><stop offset="0.85" stop-color="#f4f4f4"/><stop offset="1" stop-color="#d8d8d8"/></linearGradient></defs><path d="M578.3 157 L576.4 219.5 Q584 223.5 592.6 220 L595.6 157 Z" fill="url(#gTool)"/><ellipse cx="587" cy="156.8" rx="8.6" ry="3" fill="#9a9a9a"/><path d="M583.5 221.5 L583.8 241" stroke="#4a9696" stroke-width="1.3" fill="none"/><g stroke="#f48a8a" stroke-width="1" fill="none"><path d="M441.5 292.5 L509.6 227.2"/><path d="M505.5 226 L514.8 228.2"/><path d="M434.8 290.2 L447.2 293.6"/><path d="M422.3 269.5 L424.8 305"/><path d="M415 267.3 L427.8 271.3"/><path d="M418.9 305.3 L430.9 308.7"/><path d="M448.2 313.8 L517.5 332.8"/><path d="M446 317 L453.6 310.6"/><path d="M515 338.3 L520.8 329.6"/></g><text transform="translate(382,265) rotate(17) skewX(-12)" font-family="Liberation Sans, sans-serif" font-size="14" fill="#f48a8a" fill-opacity="0.72" textLength="27" lengthAdjust="spacingAndGlyphs">0.20</text><text transform="translate(381.5,298.5) rotate(17) skewX(-12)" font-family="Liberation Sans, sans-serif" font-size="14" fill="#f48a8a" fill-opacity="0.72" textLength="32" lengthAdjust="spacingAndGlyphs">-0.10</text><text transform="translate(419,299) rotate(-76) skewX(10)" font-family="Liberation Sans, sans-serif" font-size="11" fill="#f48a8a" fill-opacity="0.72" textLength="28" lengthAdjust="spacingAndGlyphs">0.30</text><text transform="translate(466,331) rotate(16) skewX(-14)" font-family="Liberation Sans, sans-serif" font-size="14" fill="#f48a8a" fill-opacity="0.72" textLength="27" lengthAdjust="spacingAndGlyphs">0.51</text><text transform="translate(427.5,343) rotate(-42) skewX(10)" font-family="Liberation Sans, sans-serif" font-size="13" fill="#f48a8a" fill-opacity="0.72" textLength="26" lengthAdjust="spacingAndGlyphs">5.00</text><text transform="translate(501,363.5) rotate(-52) skewX(10)" font-family="Liberation Sans, sans-serif" font-size="13" fill="#f48a8a" fill-opacity="0.72" textLength="26" lengthAdjust="spacingAndGlyphs">5.51</text><text transform="translate(469,263.5) rotate(-44) skewX(10)" font-family="Liberation Sans, sans-serif" font-size="11" fill="#f48a8a" fill-opacity="0.72" textLength="18" lengthAdjust="spacingAndGlyphs">1.00</text><text transform="translate(477,224.5) rotate(15) skewX(-10)" font-family="Liberation Sans, sans-serif" font-size="10" fill="#f48a8a" fill-opacity="0.72" textLength="23" lengthAdjust="spacingAndGlyphs">2.55</text><text x="318" y="110.2" font-family="Liberation Mono, monospace" font-size="15" fill="#f0f0f0" stroke="#f0f0f0" stroke-width="0.55" xml:space="preserve">  X:</text><text x="381.72 392.61 399.72 408.72 417.72 426.72" y="110.2" font-family="Liberation Sans, sans-serif" font-size="13.6" fill="#f0f0f0" stroke="#f0f0f0" stroke-width="0.3">5.5090</text><text x="318" y="128.0" font-family="Liberation Mono, monospace" font-size="15" fill="#f0f0f0" stroke="#f0f0f0" stroke-width="0.55" xml:space="preserve">  Y:</text><text x="381.72 392.61 399.72 408.72 417.72 426.72" y="128.0" font-family="Liberation Sans, sans-serif" font-size="13.6" fill="#f0f0f0" stroke="#f0f0f0" stroke-width="0.3">2.4038</text><text x="318" y="145.8" font-family="Liberation Mono, monospace" font-size="15" fill="#f0f0f0" stroke="#f0f0f0" stroke-width="0.55" xml:space="preserve">  Z:</text><text x="381.72 392.61 399.72 408.72 417.72 426.72" y="145.8" font-family="Liberation Sans, sans-serif" font-size="13.6" fill="#f0f0f0" stroke="#f0f0f0" stroke-width="0.3">0.2000</text><text x="318" y="163.8" font-family="Liberation Mono, monospace" font-size="15" fill="#f0f0f0" stroke="#f0f0f0" stroke-width="0.55" xml:space="preserve">Vel:</text><text x="381.72 392.61 399.72 408.72 417.72 426.72" y="163.8" font-family="Liberation Sans, sans-serif" font-size="13.6" fill="#f0f0f0" stroke="#f0f0f0" stroke-width="0.3">0.0000</text><ellipse cx="444.5" cy="104.4" rx="4.9" ry="5.7" fill="#fff"/><path d="M444.5 104.4 L440.7 104.4 A3.8 4.6 0 0 1 444.5 99.80000000000001 Z M444.5 104.4 L448.3 104.4 A3.8 4.6 0 0 1 444.5 109.0 Z" fill="#000"/><path d="M438.0 104.4 L451.5 104.4 M444.5 96.9 L444.5 112.4" stroke="#fff" stroke-width="1.1"/><ellipse cx="444.5" cy="122.4" rx="4.9" ry="5.7" fill="#fff"/><path d="M444.5 122.4 L440.7 122.4 A3.8 4.6 0 0 1 444.5 117.80000000000001 Z M444.5 122.4 L448.3 122.4 A3.8 4.6 0 0 1 444.5 127.0 Z" fill="#000"/><path d="M438.0 122.4 L451.5 122.4 M444.5 114.9 L444.5 130.4" stroke="#fff" stroke-width="1.1"/><ellipse cx="444.5" cy="140.4" rx="4.9" ry="5.7" fill="#fff"/><path d="M444.5 140.4 L440.7 140.4 A3.8 4.6 0 0 1 444.5 135.8 Z M444.5 140.4 L448.3 140.4 A3.8 4.6 0 0 1 444.5 145.0 Z" fill="#000"/><path d="M438.0 140.4 L451.5 140.4 M444.5 132.9 L444.5 148.4" stroke="#fff" stroke-width="1.1"/></svg>
<svg style="position:absolute;left:3px;top:432px;overflow:hidden" width="764" height="127" viewBox="3 432 764 127" font-family="Liberation Mono, monospace" font-size="13.3"><g transform="translate(4.2,0) scale(0.87719,1)"><text x="0" y="433.7" xml:space="preserve" fill="#7a7a7a">    21:</text><text x="63.840" y="433.7" xml:space="preserve" fill="#000">(         #6 =        zincr =          .02)</text><text x="0" y="448.7" xml:space="preserve" fill="#7a7a7a">    22:</text><text x="63.840" y="448.7" xml:space="preserve" fill="#000">(         #7 =        zsafe =          0.2)</text><text x="0" y="463.7" xml:space="preserve" fill="#7a7a7a">    23:</text><text x="63.840" y="463.7" xml:space="preserve" fill="#000">(         #8 =       zstart =            0)</text><text x="0" y="478.7" xml:space="preserve" fill="#7a7a7a">    24:</text><text x="63.840" y="478.7" xml:space="preserve" fill="#000">(         #9 =         xctr =            5)</text><text x="0" y="493.7" xml:space="preserve" fill="#7a7a7a">    25:</text><text x="63.840" y="493.7" xml:space="preserve" fill="#000">(        #10 =         ytop =            2)</text><text x="0" y="508.7" xml:space="preserve" fill="#7a7a7a">    26:</text><text x="63.840" y="508.7" xml:space="preserve" fill="#000">(        #11 =       rotate =           90)</text><text x="0" y="523.7" xml:space="preserve" fill="#7a7a7a">    27:</text><text x="63.840" y="523.7" xml:space="preserve" fill="#000">o&lt;db25&gt; call [1][2000][2][10][.1][.02][0.2][0][5][2][90]</text><text x="0" y="538.7" xml:space="preserve" fill="#7a7a7a">    28:</text><text x="63.840" y="538.7" xml:space="preserve" fill="#000">(ngcgui: m2 line added) m2 (g54 activated)</text></g></svg>
<svg style="position:absolute;left:0;top:0" width="782" height="582" viewBox="0 0 782 582"><circle cx="60" cy="97.8" r="4.9" fill="#fff"/><path d="M56.5 101.3 A4.9 4.9 0 0 1 63.5 94.3" fill="none" stroke="#8a8a8a" stroke-width="1" stroke-dasharray="1.5 0.6"/><circle cx="60" cy="97.8" r="2.3" fill="#000"/><circle cx="110.9" cy="97.8" r="4.9" fill="#fff"/><path d="M107.4 101.3 A4.9 4.9 0 0 1 114.4 94.3" fill="none" stroke="#8a8a8a" stroke-width="1" stroke-dasharray="1.5 0.6"/><circle cx="161.9" cy="97.8" r="4.9" fill="#fff"/><path d="M158.4 101.3 A4.9 4.9 0 0 1 165.4 94.3" fill="none" stroke="#8a8a8a" stroke-width="1" stroke-dasharray="1.5 0.6"/><path d="M174.7 120 L184.3 120 L179.5 125.2 Z" fill="#000"/><path d="M768 443.5 L773 432.5 L778.5 443.5 Z" fill="#d9d9d9"/><path d="M768 443.5 L773 432.5" stroke="#fff" stroke-width="1" fill="none"/><path d="M773 432.5 L778.5 443.5 L768 443.5" stroke="#828282" stroke-width="1.2" fill="none"/><path d="M768 547 L778.5 547 L773 558 Z" fill="#d9d9d9"/><path d="M773 558 L768 547 L778.5 547" stroke="#fff" stroke-width="1" fill="none"/><path d="M778.5 547 L773 558" stroke="#828282" stroke-width="1.2" fill="none"/></svg>
<div style="position:absolute;left:768px;top:518px;width:11px;height:28px;box-sizing:border-box;border-style:solid;border-width:1px;border-color:#ffffff #828282 #828282 #ffffff;"></div>
<div style="position:absolute;left:777px;top:519px;width:1px;height:26px;background:#828282"></div>
<div style="position:absolute;left:769px;top:544px;width:9px;height:1px;background:#828282"></div>
<svg style="position:absolute;left:0;top:0" width="782" height="582" viewBox="0 0 782 582"><defs><linearGradient id="gCur" x1="0" y1="0" x2="1" y2="1"><stop offset="0" stop-color="#ffffff"/><stop offset="1" stop-color="#d0d0d0"/></linearGradient></defs><path d="M637.6 532.6 L637.6 550 L641.3 546.4 L644 551 L646.4 549.7 L643.9 545 L648.9 544.9 Z" fill="url(#gCur)" stroke="#000" stroke-width="1.2" stroke-linejoin="round"/></svg>
<div style="position:absolute;left:2px;top:64px;width:3px;height:1px;background:#d9d9d9"></div>
<div style="position:absolute;left:2px;top:65px;width:2px;height:1px;background:#d9d9d9"></div>
<div style="position:absolute;left:2px;top:66px;width:1px;height:1px;background:#d9d9d9"></div>
<div style="position:absolute;left:3px;top:66px;width:1px;height:1px;background:#ffffff"></div>
<div style="position:absolute;left:4px;top:65px;width:1px;height:1px;background:#ffffff"></div>
<div style="position:absolute;left:139px;top:64px;width:2px;height:1px;background:#d9d9d9"></div>
<div style="position:absolute;left:140px;top:65px;width:1px;height:1px;background:#d9d9d9"></div>
<div style="position:absolute;left:138px;top:64px;width:1px;height:1px;background:#d9d9d9"></div>
<div style="position:absolute;left:283px;top:64px;width:3px;height:1px;background:#d9d9d9"></div>
<div style="position:absolute;left:283px;top:65px;width:2px;height:1px;background:#d9d9d9"></div>
<div style="position:absolute;left:283px;top:66px;width:1px;height:1px;background:#d9d9d9"></div>
<div style="position:absolute;left:284px;top:66px;width:1px;height:1px;background:#ffffff"></div>
<div style="position:absolute;left:285px;top:65px;width:1px;height:1px;background:#ffffff"></div>
<div style="position:absolute;left:347px;top:64px;width:2px;height:1px;background:#d9d9d9"></div>
<div style="position:absolute;left:348px;top:65px;width:1px;height:1px;background:#d9d9d9"></div>
<div style="position:absolute;left:346px;top:64px;width:1px;height:1px;background:#d9d9d9"></div>
</body></html>
